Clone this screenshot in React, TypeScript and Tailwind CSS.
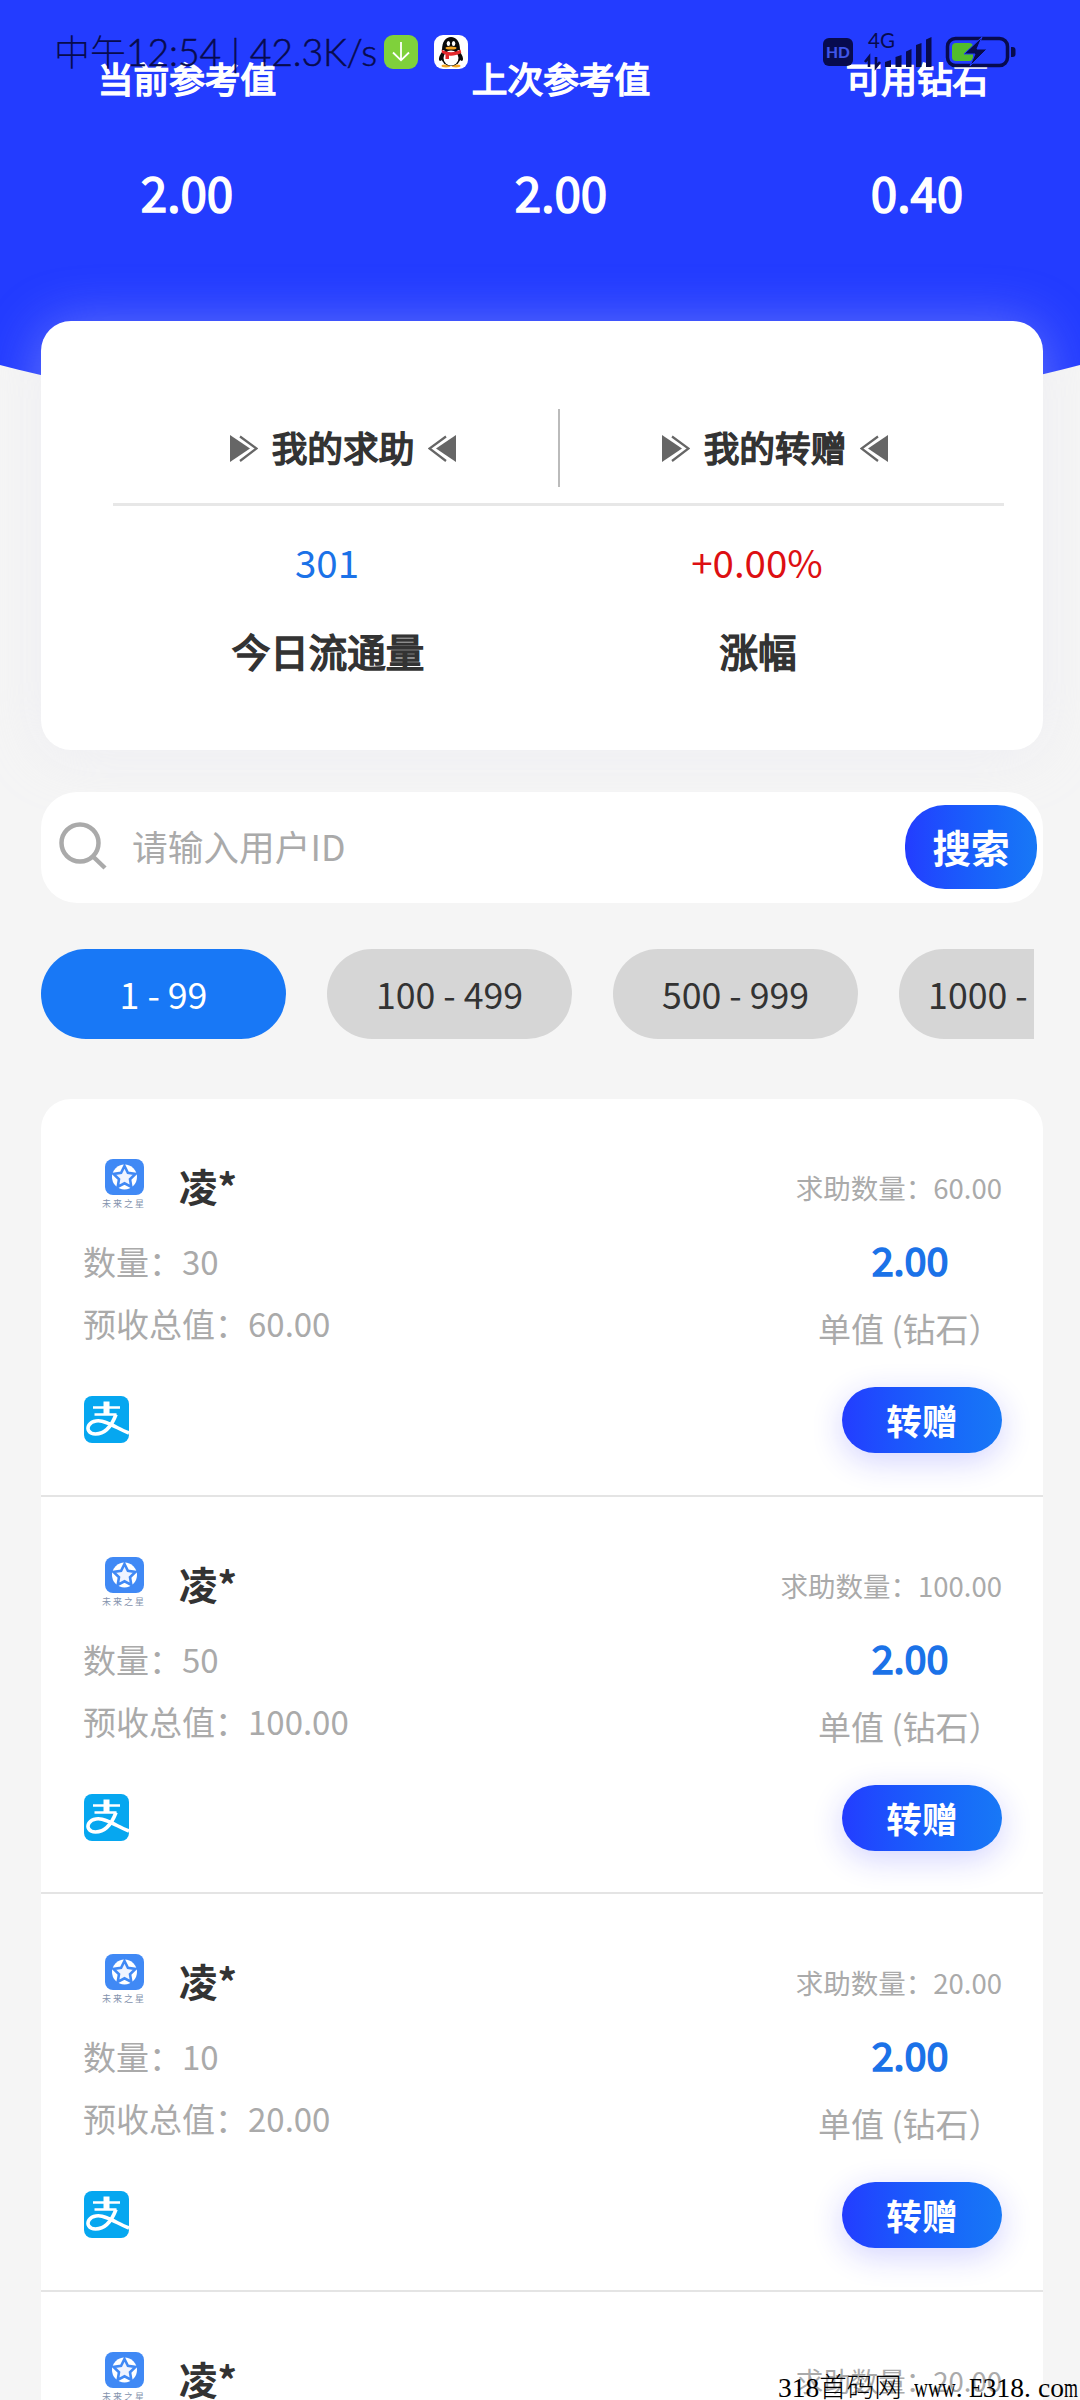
const HEADER_STATS = [
  { label: "当前参考值", value: "2.00", cell: "w-[374px]" },
  { label: "上次参考值", value: "2.00", cell: "w-[374px]" },
  { label: "可用钻石", value: "0.40", cell: "w-[338px]" },
];

const TABS = ["我的求助", "我的转赠"];

const RANGES = ["1 - 99", "100 - 499", "500 - 999", "1000 - 4999"];

interface Order {
  id: number;
  name: string;
  count: number;
  total: string;
}

const ORDERS: Order[] = [
  { id: 1, name: "凌*", count: 30, total: "60.00" },
  { id: 2, name: "凌*", count: 50, total: "100.00" },
  { id: 3, name: "凌*", count: 10, total: "20.00" },
  { id: 4, name: "凌*", count: 10, total: "20.00" },
];

export default function App() {
  return (
    <main className="relative h-[2400px] w-[1080px] overflow-hidden bg-[#f5f5f5] font-['Noto_Sans_CJK_SC',sans-serif] text-[#333]">
      <Header />
      <StatusBar />

      <div className="relative mt-[-113px] ml-[41px] w-[1002px]">
        <SummaryCard />
        <SearchBar />
        <RangeFilter />

        <section className="mt-[60px] rounded-t-[30px] bg-white">
          {ORDERS.map((o) => (
            <OrderRow key={o.id} order={o} />
          ))}
        </section>
      </div>

      <Watermark />
    </main>
  );
}

function Header() {
  return (
    <header className="flex h-[434px] bg-[#233cff] pt-[52px] text-center text-white [-webkit-text-stroke:1.6px] [clip-path:circle(2150px_at_50%_-1716px)]">
      {HEADER_STATS.map((s, i) => (
        <div key={i} className={`${s.cell} shrink-0`}>
          <div className="text-[35.7px] leading-[52px]">{s.label}</div>
          <div className="mt-[52px] text-[47.5px] leading-[72px]">{s.value}</div>
        </div>
      ))}
    </header>
  );
}

function StatusBar() {
  return (
    <div className="absolute inset-x-0 top-[30px] flex h-11 items-center text-[#070b4e]">
      <span className="ml-[54px] w-[330px] whitespace-nowrap text-[36px] font-light">
        中午<span className="font-['Lato'] text-[37.5px] tracking-[-0.2px] [-webkit-text-stroke:0.5px]">12:54 | 42.3K/s</span>
      </span>
      <DownloadIcon />
      <QQIcon />
      <SystemIcons />
    </div>
  );
}

function DownloadIcon() {
  return (
    <svg width="34" height="34" viewBox="0 0 34 34" className="shrink-0">
      <rect width="34" height="34" rx="9" fill="#7fd13b" />
      <path d="M17 7v18M9 17.5l8 7.8 8-7.8" fill="none" stroke="#fff" strokeWidth="1.8" />
    </svg>
  );
}

function QQIcon() {
  return (
    <svg width="34" height="34" viewBox="0 0 34 34" className="ml-4 shrink-0">
      <rect width="34" height="34" rx="9" fill="#fff" />
      <ellipse cx="12" cy="31" rx="4.5" ry="1.4" fill="#f5a623" />
      <ellipse cx="22" cy="31" rx="4.5" ry="1.4" fill="#f5a623" />
      <path d="M8 17c-3 4-4 8-2 9 1 0 2-1 3-3zM26 17c3 4 4 8 2 9-1 0-2-1-3-3z" fill="#0a0a0a" />
      <ellipse cx="17" cy="22" rx="10" ry="9" fill="#0a0a0a" />
      <ellipse cx="17" cy="23" rx="7.5" ry="7.6" fill="#fff" />
      <path d="M8 15c0-8 3.5-13 9-13s9 5 9 13z" fill="#0a0a0a" />
      <ellipse cx="14.4" cy="8.5" rx="1.7" ry="2.5" fill="#fff" />
      <ellipse cx="19.6" cy="8.5" rx="1.7" ry="2.5" fill="#fff" />
      <ellipse cx="17" cy="13" rx="5.5" ry="1.5" fill="#f5a623" />
      <path d="M7.5 14.5c6 3.5 13 3.5 19 0l.8 3.5c-5 2.5-9 3-12.3 2.5V24h-3.5v-4.5L8 18z" fill="#e3282d" />
    </svg>
  );
}

// HD badge, signal strength and charging battery
function SystemIcons() {
  return (
    <svg width="196" height="38" viewBox="0 0 196 38" className="ml-[353px] shrink-0">
      <rect x="2" y="5" width="30" height="28" rx="6" fill="#070b4e" />
      <text x="17" y="24.5" textAnchor="middle" fontSize="15.5" fontWeight="900" fontFamily="Lato" fill="#3f55e8">HD</text>
      <text x="47" y="15" fontSize="20.5" fontFamily="Lato" fill="#070b4e">4G</text>
      <path d="M48 34V24l-4 5M55 24v10l4-5" stroke="#070b4e" strokeWidth="2.6" fill="none" />
      <path d="M64 34v-5l6-2v7zM74.5 34V24l6-2v12zM85 34V18.5l5.5-2.5v18zM95 34V12l5.5-2v24zM105 34V6.5l5.5-2.500v30z" fill="#070b4e" />
      <rect x="126.5" y="5.5" width="60" height="27" rx="8" fill="none" stroke="#070b4e" strokeWidth="3.5" />
      <rect x="131" y="10" width="21" height="18" rx="4" fill="#52bd2c" />
      <path d="M190 14h1.5q3 0 3 3v4q0 3-3 3H190z" fill="#070b4e" />
      <path d="M161 4l-18 17h11l-5 12 17-17h-10z" fill="#070b4e" stroke="#233cff" strokeWidth="1" />
    </svg>
  );
}

function SummaryCard() {
  return (
    <section className="h-[429px] rounded-[30px] bg-white pt-[88px] shadow-[0_5px_56px_rgba(226,228,242,0.36)]">
      <div className="ml-[87px] flex h-[78px] items-center">
        <TabTitle label={TABS[0]} />
        <div className="h-full w-[2px] bg-[#bbb]" />
        <TabTitle label={TABS[1]} />
      </div>
      <div className="mt-4 ml-[72px] h-[3px] w-[891px] bg-[#e7e7e7]" />
      <div className="ml-[71px] flex pt-[27px] text-center">
        <SummaryCell value="301" label="今日流通量" tone="text-[#1b72e8]" />
        <SummaryCell value="+0.00%" label="涨幅" tone="text-[#dd0f12]" />
      </div>
    </section>
  );
}

function TabTitle({ label }: { label: string }) {
  return (
    <div className="flex w-[430px] items-center justify-center gap-[14px]">
      <ArrowMark />
      <span className="mb-[3px] text-[35.7px] leading-[52px] [-webkit-text-stroke:1.6px]">{label}</span>
      <ArrowMark flip />
    </div>
  );
}

function ArrowMark({ flip = false }: { flip?: boolean }) {
  return (
    <svg width="28" height="28" viewBox="0 0 28 28" className={flip ? "mt-px -scale-x-100" : "mt-px"}>
      <path d="M0 0v27l20-13.5z" fill="#666" />
      <path d="M10 1.5l16.5 12L10 26" fill="none" stroke="#666" strokeWidth="2.2" />
    </svg>
  );
}

function SummaryCell({ value, label, tone }: { value: string; label: string; tone: string }) {
  return (
    <div className="w-[430px]">
      <div className={`text-[38.5px] leading-[56px] ${tone}`}>{value}</div>
      <div className="mt-[33px] pl-[2px] text-[38.5px] leading-[56px] [-webkit-text-stroke:1.7px]">{label}</div>
    </div>
  );
}

function SearchBar() {
  return (
    <div className="mt-[42px] flex h-[111px] items-center rounded-[36px] bg-white pr-[6px] pl-[18px]">
      <svg width="48" height="48" viewBox="0 0 48 48" fill="none" stroke="#aaa" strokeWidth="4.5" className="mb-[3px]">
        <circle cx="21" cy="21" r="18.5" />
        <path d="M34 34.5l12 11.5" />
      </svg>
      <span className="mb-[3px] ml-[25px] flex-1 text-[35.7px] text-[#aaa]">请输入用户ID</span>
      <button className="mb-[2px] h-[84px] w-[132px] rounded-[40px] bg-linear-to-r from-[#233cff] to-[#1878f6] text-[38.5px] font-bold text-white">
        搜索
      </button>
    </div>
  );
}

function RangeFilter() {
  return (
    <div className="mt-[46px] flex w-[993px] gap-[41px] overflow-hidden">
      {RANGES.map((r, i) => (
        <button
          key={r}
          className={`h-[90px] w-[245px] shrink-0 rounded-full text-[35.7px] whitespace-nowrap ${
            i === 0 ? "bg-[#1878f6] text-white" : "bg-[#d6d6d6] text-[#333]"
          }`}
        >
          {r}
        </button>
      ))}
    </div>
  );
}

function OrderRow({ order }: { order: Order }) {
  return (
    <article className="flex h-[397.5px] justify-between border-b-[2px] border-[#e4e4e4] pr-[41px] pl-[42px]">
      <div>
        <div className="mt-[60px] flex h-[52px] pl-[18px]">
          <StarLogo />
          <span className="mt-[-2px] ml-[32px] text-[38.5px] leading-[56px] font-bold">{order.name}</span>
        </div>
        <div className="mt-[19px] text-[33px] leading-[62px] text-[#aaa]">
          <div>数量：{order.count}</div>
          <div>预收总值：{order.total}</div>
        </div>
        <AlipayIcon />
      </div>

      <div className="flex flex-col items-end">
        <div className="mt-[68px] text-[27.5px] leading-[40px] text-[#aaa]">求助数量：{order.total}</div>
        <div className="mt-[22px] w-[184px] text-center text-[39.5px] leading-[60px] text-[#1b72e8] [-webkit-text-stroke:1.6px]">2.00</div>
        <div className="mt-[15px] w-[184px] text-[33px] leading-[48px] whitespace-nowrap text-[#aaa]">单值 (钻石）</div>
        <button className="mt-[35px] h-[66px] w-[160px] rounded-full bg-linear-to-r from-[#233cff] to-[#1878f6] text-[35.7px] leading-[64px] font-bold text-white shadow-[0_8px_32px_rgba(35,35,255,0.2)]">
          转赠
        </button>
      </div>
    </article>
  );
}

function StarLogo() {
  return (
    <div className="flex w-[46px] flex-col items-center">
      <svg width="39" height="36" viewBox="0 0 39 36">
        <rect width="39" height="36" rx="8" fill="#4089f5" />
        <circle cx="19.5" cy="18" r="12.5" fill="#fff" />
        <path d="M19.5 7l3.4 6.8 7.6 1.2-5.5 5.3 1.3 7.5-6.8-3.5-6.8 3.5 1.3-7.5-5.5-5.3 7.6-1.2z" fill="#f0f4ff" stroke="#4089f5" strokeWidth="2.6" />
      </svg>
      <span className="mt-[2px] text-[9px] leading-[13px] tracking-[2px] whitespace-nowrap text-[#8493ad]">未来之星</span>
    </div>
  );
}

function AlipayIcon() {
  return (
    <svg width="45" height="47" viewBox="0 0 45 47" className="mt-[42px] ml-px">
      <rect width="45" height="47" rx="8" fill="#06a7f0" />
      <path d="M9 11.500h27M10.5 18.5h22" stroke="#fff" strokeWidth="2.6" />
      <path d="M22.5 5.5v13" stroke="#fff" strokeWidth="6" />
      <path d="M32 18.5C28 29 22 38 11.5 38 5 38 2.5 33 5 29c3-4.5 10-5.5 17-2.5 8 3 15 7.500 23 10.500" fill="none" stroke="#fff" strokeWidth="3.6" />
    </svg>
  );
}

function Watermark() {
  return (
    <div className="absolute right-0 bottom-[-4px] flex h-8 items-center font-['Liberation_Serif','Noto_Sans_CJK_SC',serif] text-[27.5px] leading-8 text-black">
      <span>318</span>
      <span className="font-light">首码网</span>
      <span className="ml-[12px] w-[42px] origin-left scale-x-[.7]">www</span>
      <span className="w-[13px]">.</span>
      <span className="w-[14px] origin-left scale-x-[.85]">E</span>
      <span>318</span>
      <span className="w-[14px]">.</span>
      <span className="flex w-[42px]">
        <span className="w-[14px]">c</span>
        <span className="w-[14px]">o</span>
        <span className="origin-left scale-x-[.65]">m</span>
      </span>
    </div>
  );
}
